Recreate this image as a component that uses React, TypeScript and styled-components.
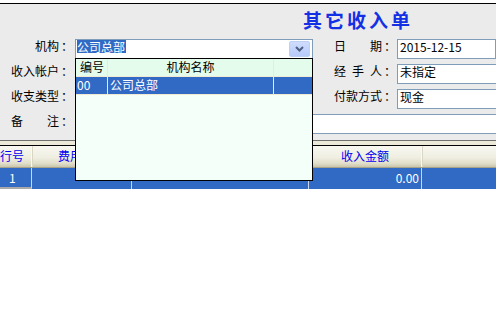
import type { FC } from 'react';
import styled, { createGlobalStyle } from 'styled-components';

const GlobalStyle = createGlobalStyle`
  html, body {
    margin: 0;
    padding: 0;
    background: #fff;
  }
  body {
    font-family: "Noto Sans CJK SC", "Noto Sans", sans-serif;
    font-size: 12px;
    color: #000;
  }
`;

const SELECT_BLUE = '#316ac5';
const FIELD_BORDER = '#7f9db9';

const Page = styled.div`
  width: 496px;
  height: 312px;
  overflow: hidden;
  padding-top: 3px;
  box-sizing: border-box;
  background: #fff;
`;

const FormPanel = styled.div`
  background: #ebebeb;
  border-top: 1px solid #000;
  padding-bottom: 6px;
`;

const TitleRow = styled.div`
  height: 35px;
  line-height: 31px;
  padding-left: 303px;
`;

const Title = styled.span`
  font-size: 19px;
  font-weight: 700;
  letter-spacing: 3px;
  color: #1430e4;
`;

const FormGrid = styled.div`
  display: grid;
  grid-template-columns: 75px 238px 21px 63px 99px;
  grid-auto-rows: 20px;
  row-gap: 5px;
`;

const Label = styled.div<{ $side: 'left' | 'right' }>`
  display: flex;
  justify-content: ${p => (p.$side === 'left' ? 'flex-end' : 'flex-start')};
  padding-right: ${p => (p.$side === 'left' ? '4px' : '0')};
  line-height: 14px;
  white-space: nowrap;
`;

const LabelText = styled.span<{ $justify?: boolean }>`
  width: 48px;
  text-align: ${p => (p.$justify ? 'justify' : 'right')};
  text-align-last: ${p => (p.$justify ? 'justify' : 'right')};
`;

const Colon = styled.span`
  width: 10px;
  padding-left: 2px;
`;

const Field = styled.div<{ $wide?: boolean; $openRight?: boolean }>`
  box-sizing: border-box;
  height: 20px;
  border: 1px solid ${FIELD_BORDER};
  border-right-width: ${p => (p.$openRight ? '0' : '1px')};
  background: #fff;
  padding: 0 2px;
  line-height: 13px;
  white-space: nowrap;
  overflow: hidden;
  grid-column: ${p => (p.$wide ? '2 / -1' : 'auto')};
`;

const Spacer = styled.div``;

const Combo = styled.div`
  position: relative;
  box-sizing: border-box;
  height: 20px;
  border: 1px solid ${FIELD_BORDER};
  background: #fff;
  display: flex;
  align-items: flex-start;
`;

const Selected = styled.span`
  margin-left: 1px;
  padding-right: 1px;
  height: 13px;
  line-height: 13px;
  background: ${SELECT_BLUE};
  color: #fff;
`;

const DropButton = styled.div`
  margin: 1px 2px 0 auto;
  width: 21px;
  height: 16px;
  box-sizing: border-box;
  border: 1px solid #bcd0f6;
  border-radius: 2px;
  background: linear-gradient(#cfdcfd, #b7cafa);
  display: flex;
  align-items: center;
  justify-content: center;
`;

const Dropdown = styled.div`
  position: absolute;
  top: 100%;
  left: -1px;
  width: 238px;
  height: 123px;
  box-sizing: border-box;
  border: 1px solid #000;
  background: #f4fff9;
  z-index: 5;
`;

const DropRow = styled.div<{ $head?: boolean }>`
  display: grid;
  grid-template-columns: 32px 166px 1fr;
  height: 17px;
  background: ${p => (p.$head ? '#e4fcec' : SELECT_BLUE)};
  color: ${p => (p.$head ? '#000' : '#fff')};
  border-bottom: 1px solid #f1ead2;
  line-height: 16px;
`;

const DropCell = styled.div<{ $align?: 'left' | 'center'; $pad?: number }>`
  border-right: 1px solid #f1ead2;
  text-align: ${p => p.$align ?? 'left'};
  padding-left: ${p => p.$pad ?? 0}px;
  white-space: nowrap;
  overflow: hidden;
  &:last-child {
    border-right: 0;
  }
`;

const GridFrame = styled.div`
  border-top: 1px solid #6f6f6f;
`;

const Band = styled.div`
  height: 4px;
  background: #ece9d8;
  border-bottom: 1px solid #000;
`;

const Columns = '32px 100px 177px 113px 1fr';

const HeaderRow = styled.div`
  display: grid;
  grid-template-columns: ${Columns};
  height: 22px;
  box-sizing: border-box;
  background: linear-gradient(#f8f8f1 0%, #efeee1 55%, #e2dfca 82%, #c9c5ad 100%);
  border-bottom: 1px solid #a7a38b;
  color: #0000f0;
  line-height: 19px;
`;

const HeadCell = styled.div<{ $align?: 'left' | 'center'; $divider?: boolean }>`
  text-align: ${p => p.$align ?? 'center'};
  border-right: ${p => (p.$divider ? '1px solid #fbfbf6' : '0')};
  box-shadow: ${p => (p.$divider ? '1px 0 0 #d9d6c4' : 'none')};
  white-space: nowrap;
  overflow: hidden;
`;

const DataRow = styled.div`
  display: grid;
  grid-template-columns: ${Columns};
  height: 21px;
  background: ${SELECT_BLUE};
  color: #fff;
  line-height: 19px;
`;

const DataCell = styled.div<{ $align?: 'left' | 'right'; $rowNo?: boolean }>`
  box-sizing: border-box;
  text-align: ${p => p.$align ?? 'left'};
  padding: ${p => (p.$rowNo ? '0 0 0 9px' : '0 2px 0 0')};
  border-right: 1px solid #c9d6ee;
  border-bottom: ${p => (p.$rowNo ? '2px solid #a9a9a9' : '0')};
  &:last-child {
    border-right: 0;
  }
`;

const Chevron: FC = () => (
  <svg width="9" height="6" viewBox="0 0 9 6">
    <polyline points="1,1 4.5,4.5 8,1" fill="none" stroke="#4d6185" strokeWidth="2" />
  </svg>
);

const App: FC = () => (
  <>
    <GlobalStyle />
    <Page>
      <FormPanel>
        <TitleRow>
          <Title>其它收入单</Title>
        </TitleRow>
        <FormGrid>
          <Label $side="left">
            <LabelText>机构</LabelText>
            <Colon>：</Colon>
          </Label>
          <Combo>
            <Selected>公司总部</Selected>
            <DropButton>
              <Chevron />
            </DropButton>
            <Dropdown>
              <DropRow $head>
                <DropCell $pad={4}>编号</DropCell>
                <DropCell $align="center">机构名称</DropCell>
                <DropCell />
              </DropRow>
              <DropRow>
                <DropCell $pad={1}>00</DropCell>
                <DropCell $pad={2}>公司总部</DropCell>
                <DropCell />
              </DropRow>
            </Dropdown>
          </Combo>
          <Spacer />
          <Label $side="right">
            <LabelText $justify>日期</LabelText>
            <Colon>：</Colon>
          </Label>
          <Field>2015-12-15</Field>

          <Label $side="left">
            <LabelText>收入帐户</LabelText>
            <Colon>：</Colon>
          </Label>
          <Field />
          <Spacer />
          <Label $side="right">
            <LabelText $justify>经手人</LabelText>
            <Colon>：</Colon>
          </Label>
          <Field $openRight>未指定</Field>

          <Label $side="left">
            <LabelText>收支类型</LabelText>
            <Colon>：</Colon>
          </Label>
          <Field />
          <Spacer />
          <Label $side="right">
            <LabelText>付款方式</LabelText>
            <Colon>：</Colon>
          </Label>
          <Field $openRight>现金</Field>

          <Label $side="left">
            <LabelText $justify>备注</LabelText>
            <Colon>：</Colon>
          </Label>
          <Field $wide $openRight />
        </FormGrid>
      </FormPanel>
      <GridFrame>
        <Band />
        <HeaderRow>
          <HeadCell $align="left" $divider>行号</HeadCell>
          <HeadCell>费用类型</HeadCell>
          <HeadCell>收入帐户</HeadCell>
          <HeadCell $divider>收入金额</HeadCell>
          <HeadCell />
        </HeaderRow>
        <DataRow>
          <DataCell $rowNo>1</DataCell>
          <DataCell />
          <DataCell />
          <DataCell $align="right">0.00</DataCell>
          <DataCell />
        </DataRow>
      </GridFrame>
    </Page>
  </>
);

export default App;
